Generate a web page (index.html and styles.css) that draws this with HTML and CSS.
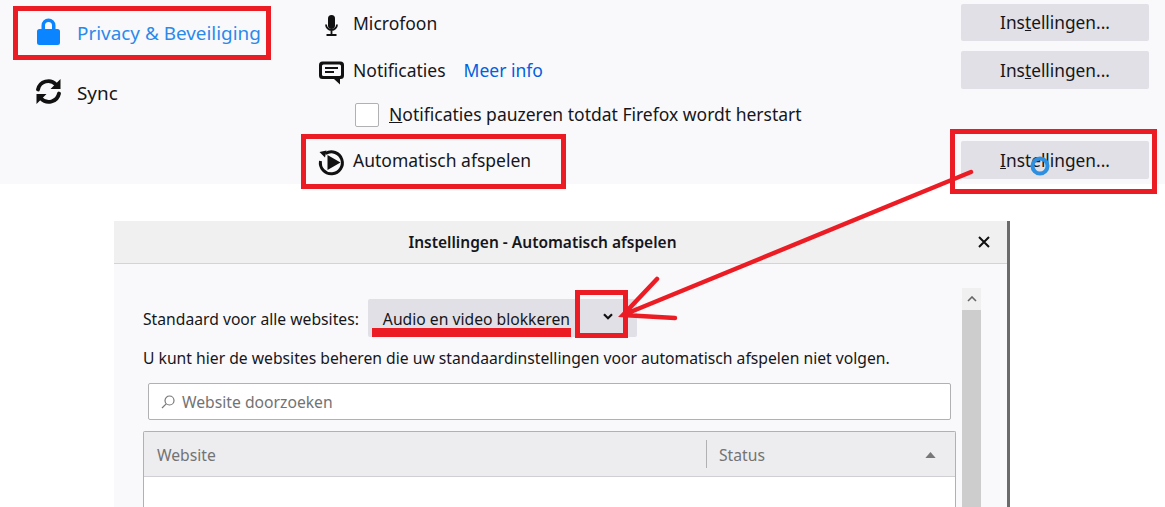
FILE: index.html
```html
<!DOCTYPE html>
<html lang="nl">
<head>
<meta charset="utf-8">
<title>Instellingen - Automatisch afspelen</title>
<link rel="stylesheet" href="styles.css">
</head>
<body>
<div class="page">
  <section class="prefs">
    <nav class="side">
      <a class="side-item active">
        <svg class="side-icon lock" viewBox="0 0 23 27"><path fill="#0a84ff" d="M4.500 11V7.500a7 7 0 0 1 14 0V11h2A2.500 2.500 0 0 1 23 13.500v11a2.500 2.500 0 0 1-2.500 2.500h-18A2.500 2.500 0 0 1 0 24.500v-11A2.500 2.500 0 0 1 2.500 11zm3.500 0h7V7.500a3.500 3.500 0 0 0-7 0z"/></svg>
        <span class="side-text">Privacy &amp; Beveiliging</span>
      </a>
      <a class="side-item">
        <svg class="side-icon sync" viewBox="0 0 27 27"><g fill="none" stroke="#111" stroke-width="3.800" stroke-linecap="round"><path d="M3 11.500A10.500 10.500 0 0 1 21 6.500"/><path d="M24 15.500A10.500 10.500 0 0 1 6 20.500"/></g><path fill="#111" d="M25.500 1v10h-10zM1.500 26V16h10z"/></svg>
        <span class="side-text">Sync</span>
      </a>
    </nav>
    <div class="perms">
      <div class="perm perm-mic">
        <span class="perm-label">
          <svg class="perm-icon" viewBox="0 0 26 26"><rect x="10" y="5" width="7" height="14" rx="3.500" fill="#111"/><path d="M8 14.500a5.500 5.500 0 0 0 11 0M13.500 20v5M8.500 25h10" fill="none" stroke="#111" stroke-width="1.800"/></svg>
          Microfoon
        </span>
        <button class="btn">Ins<u>t</u>ellingen...</button>
      </div>
      <div class="perm perm-notif">
        <span class="perm-label">
          <svg class="perm-icon" viewBox="0 0 26 26"><path fill="#111" d="M4.500 4.500h18A3.500 3.500 0 0 1 26 8v10.500a3.500 3.500 0 0 1-3.500 3.500H22v5.500l-6-5.500H4.500A3.500 3.500 0 0 1 1 18.500V8A3.500 3.500 0 0 1 4.500 4.500z"/><rect x="4" y="7.500" width="19" height="11.500" rx="1.500" fill="#f9f9fb"/><path d="M7 11h13M7 15h9" stroke="#111" stroke-width="2"/></svg>
          Notificaties
          <a class="more">Meer info</a>
        </span>
        <button class="btn">Ins<u>t</u>ellingen...</button>
      </div>
      <label class="pause">
        <span class="check"></span>
        <span class="pause-text"><u>N</u>otificaties pauzeren totdat Firefox wordt herstart</span>
      </label>
      <div class="perm perm-auto">
        <span class="perm-label">
          <svg class="perm-icon" viewBox="0 0 26 26"><path d="M7.500 6.500A11 11 0 1 1 2.500 14" fill="none" stroke="#111" stroke-width="3"/><path fill="#111" d="M1.500 5l7-1.500-1.500 7zM9.500 8l13 7.500-13 7.500z"/></svg>
          Automatisch afspelen
        </span>
        <button class="btn"><u>I</u>nstellingen...</button>
      </div>
    </div>
  </section>

  <section class="dialog">
    <header class="dialog-head">
      <h1 class="dialog-title">Instellingen - Automatisch afspelen</h1>
      <svg class="close" viewBox="0 0 12 12"><path d="M1 1l10 10M11 1L1 11" fill="none" stroke="#111" stroke-width="2"/></svg>
    </header>
    <div class="dialog-body">
      <div class="dialog-content">
        <div class="default-row">
          <span class="default-label">Standaard voor alle websites:</span>
          <div class="select">
            <span class="select-text">Audio en video blokkeren</span>
            <svg class="chevron" viewBox="0 0 10 7"><path d="M1 1.200l4 4 4-4" fill="none" stroke="#111" stroke-width="2.200"/></svg>
          </div>
        </div>
        <p class="hint">U kunt hier de websites beheren die uw standaardinstellingen voor automatisch afspelen niet volgen.</p>
        <div class="search">
          <svg class="search-icon" viewBox="0 0 14 14"><circle cx="8.500" cy="5.500" r="4.500" fill="none" stroke="#777" stroke-width="1.200"/><path d="M5.200 8.800L1 13" stroke="#777" stroke-width="1.200"/></svg>
          <span>Website doorzoeken</span>
        </div>
        <div class="table">
          <div class="thead">
            <span class="col-site">Website</span>
            <span class="col-status">Status</span>
            <svg class="sort" viewBox="0 0 12 7"><path fill="#777" d="M6 0l6 7H0z"/></svg>
          </div>
        </div>
      </div>
      <div class="scrollbar">
        <div class="scroll-up"><svg viewBox="0 0 10 6"><path d="M1 5l4-4 4 4" fill="none" stroke="#666" stroke-width="1.600"/></svg></div>
        <div class="scroll-thumb"></div>
      </div>
    </div>
  </section>

  <svg class="marks" viewBox="0 0 1165 507">
    <g fill="none" stroke="#ec1c24">
      <rect x="15.500" y="8.500" width="253" height="49" stroke-width="5"/>
      <rect x="303.500" y="136.500" width="260" height="50" stroke-width="5"/>
      <rect x="952.500" y="131.500" width="202" height="60" stroke-width="5"/>
      <rect x="577.500" y="292.500" width="48" height="43" stroke-width="5"/>
      <path d="M971 172L623 315M657 279L623 315L675 318" stroke-width="4.500" stroke-linecap="round"/>
    </g>
    <rect x="372" y="328" width="199" height="9" fill="#ec1c24"/>
    <circle cx="1040" cy="166" r="7.500" fill="none" stroke="#2e8fe0" stroke-width="4"/>
  </svg>
</div>
</body>
</html>
```
FILE: styles.css
```css
* { box-sizing: border-box; }
html, body { margin: 0; height: 100%; overflow: hidden; background: #fff; }
body { font-family: "Noto Sans", "Liberation Sans", sans-serif; font-size: 17.500px; color: #16161a; }
.page { position: relative; width: 1165px; height: 507px; overflow: hidden; }

.prefs { height: 184px; background: #f9f9fb; display: flex; }
.side { width: 318px; padding: 17px 0 0 35px; display: flex; flex-direction: column; gap: 32px; flex: none; }
.side-item { display: flex; align-items: center; height: 28px; font-size: 18.900px; }
.side-item.active { color: #2a8aeb; }
.side-text { padding-top: 4px; }
.side-icon { flex: none; }
.lock { width: 23px; height: 27px; margin: 0 17px 0 2px; }
.sync { width: 27px; height: 27px; margin-right: 15px; }

.perms { width: 831px; padding-top: 4px; display: flex; flex-direction: column; }
.perm { display: flex; align-items: center; justify-content: space-between; height: 37px; }
.perm-notif { height: 38px; margin-top: 10px; }
.perm-auto { height: 38px; margin-top: 14px; }
.perm-label { display: flex; align-items: center; white-space: nowrap; }
.perm-notif .perm-label { padding-bottom: 1px; }
.perm-icon { width: 26px; height: 26px; margin-right: 9px; flex: none; overflow: visible; }
.more { color: #0060df; margin-left: 18px; }
.btn { width: 188px; height: 100%; border: 0; border-radius: 2px; background: #e0e0e6; color: #16161a; font: inherit; font-size: 17.300px; padding: 0; }

.pause { display: flex; align-items: center; gap: 10px; margin: 14px 0 0 37px; height: 24px; white-space: nowrap; }
.pause-text { padding-bottom: 2px; }
.check { width: 24px; height: 24px; background: #fff; border: 1px solid #b1b1b3; border-radius: 2px; flex: none; }

.dialog { margin: 37px 0 0 114px; width: 896px; height: 286px; border-right: 3px solid #6b6b6b; background: #f9f9fb; display: flex; flex-direction: column; }
.dialog-head { height: 43px; flex: none; background: #f0f0f0; border-bottom: 1px solid #d4d4d8; position: relative; display: flex; align-items: center; justify-content: center; }
.dialog-title { margin: 0 0 0 -36px; font-size: 15.500px; font-weight: 600; }
.close { width: 12px; height: 12px; position: absolute; right: 17px; top: 15px; }

.dialog-body { flex: 1; display: flex; min-height: 0; }
.dialog-content { width: 848px; padding: 35px 0 0 29px; font-size: 15.700px; flex: none; }
.default-row { display: flex; align-items: center; gap: 9px; height: 38px; white-space: nowrap; }
.default-label { padding-top: 2px; }
.select { width: 269px; height: 100%; background: #e0e0e6; border-radius: 2px; padding: 0 8px 0 15px; display: flex; align-items: center; justify-content: space-between; }
.select-text { padding-top: 2px; }
.chevron { width: 10px; height: 7px; margin: 0 16px 4px 0; }
.hint { margin: 9px 0 0; line-height: 24px; white-space: nowrap; }
.search { margin: 13px 0 0 5px; width: 803px; height: 37px; background: #fff; border: 1px solid #b1b1b3; border-radius: 2px; display: flex; align-items: center; gap: 7px; padding-left: 12px; color: #737373; }
.search-icon { width: 14px; height: 14px; flex: none; }
.table { margin-top: 11px; width: 813px; height: 76px; background: #fff; border: 1px solid #b1b1b3; border-bottom: 0; border-radius: 2px 2px 0 0; }
.thead { height: 45px; background: #ededf0; border-bottom: 1px solid #d0d0d4; display: flex; align-items: center; color: #737373; position: relative; }
.col-site { width: 562px; padding: 2px 0 0 13px; }
.col-status { border-left: 1px solid #b1b1b3; height: 28px; line-height: 30px; padding-left: 12px; }
.sort { width: 11px; height: 6px; position: absolute; right: 19px; top: 20px; }

.scrollbar { width: 19px; margin: 24px 0 0; display: flex; flex-direction: column; flex: none; }
.scroll-up { height: 22px; background: #f0f0f0; display: flex; align-items: center; justify-content: center; }
.scroll-up svg { width: 10px; height: 6px; }
.scroll-thumb { flex: 1; background: #cdcdcd; }

.marks { position: absolute; left: 0; top: 0; width: 1165px; height: 507px; pointer-events: none; }
```
